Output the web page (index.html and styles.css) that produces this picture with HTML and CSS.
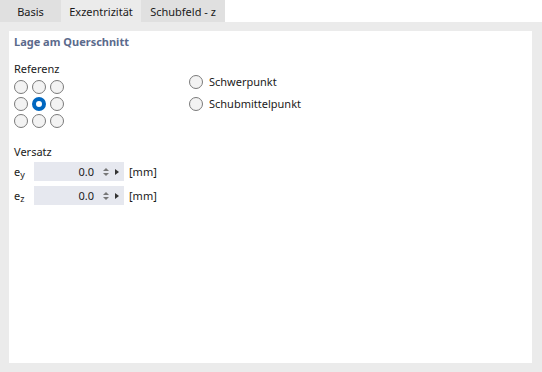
FILE: index.html
```html
<!DOCTYPE html>
<html lang="de">
<head>
    <meta charset="UTF-8">
    <title>Exzentrizität</title>
    <link rel="stylesheet" href="styles.css">
</head>
<body>
    <div class="tabs">
        <div class="tab tab-basis">Basis</div>
        <div class="tab tab-active">Exzentrizität</div>
        <div class="tab tab-schub">Schubfeld - z</div>
    </div>
    <div class="frame">
        <div class="panel">
            <h1 class="group-title">Lage am Querschnitt</h1>

            <div class="ref-row">
                <div class="ref-left">
                    <div class="label">Referenz</div>
                    <div class="grid">
                        <span class="radio"></span>
                        <span class="radio"></span>
                        <span class="radio"></span>
                        <span class="radio"></span>
                        <span class="radio checked"></span>
                        <span class="radio"></span>
                        <span class="radio"></span>
                        <span class="radio"></span>
                        <span class="radio"></span>
                    </div>
                </div>
                <div class="ref-right">
                    <div class="option"><span class="radio"></span>Schwerpunkt</div>
                    <div class="option"><span class="radio"></span>Schubmittelpunkt</div>
                </div>
            </div>

            <div class="label versatz">Versatz</div>
            <div class="field">
                <span class="sym">e<sub>y</sub></span>
                <div class="input">
                    <span class="value">0.0</span>
                    <span class="spin"><i class="up"></i><i class="down"></i></span>
                    <span class="play"></span>
                </div>
                <span class="unit">[mm]</span>
            </div>
            <div class="field">
                <span class="sym">e<sub>z</sub></span>
                <div class="input">
                    <span class="value">0.0</span>
                    <span class="spin"><i class="up"></i><i class="down"></i></span>
                    <span class="play"></span>
                </div>
                <span class="unit">[mm]</span>
            </div>
        </div>
    </div>
</body>
</html>
```

FILE: styles.css
```css
body {
    margin: 0;
    width: 542px;
    height: 372px;
    background-color: #ffffff;
    font-family: "Segoe UI", "Noto Sans", "Open Sans", sans-serif;
    font-size: 11px;
    color: #1a1a1a;
    display: flex;
    flex-direction: column;
    overflow: hidden;
}

.tabs {
    display: flex;
    height: 22px;
}

.tab {
    display: flex;
    align-items: center;
    justify-content: center;
    height: 22px;
    background-color: #e0e0e0;
}

.tab-basis {
    width: 61px;
}

.tab-active {
    width: 80px;
    background-color: #ebebeb;
}

.tab-schub {
    width: 84px;
}

.frame {
    flex: 1;
    background-color: #ebebeb;
    padding: 9px 10px 9px 9px;
    display: flex;
}

.panel {
    flex: 1;
    background-color: #ffffff;
    padding: 3px 5px;
}

.group-title {
    margin: 0;
    font-size: 11px;
    font-weight: bold;
    color: #5b6a8c;
    line-height: 16px;
}

.ref-row {
    display: flex;
    margin-top: 11px;
}

.ref-left {
    width: 175px;
}

.label {
    line-height: 16px;
}

.grid {
    display: grid;
    grid-template-columns: repeat(3, 14px);
    gap: 3px 4px;
    margin-top: 3px;
}

.radio {
    display: inline-block;
    box-sizing: border-box;
    width: 14px;
    height: 14px;
    border: 1px solid #7a7a7a;
    border-radius: 50%;
    background-color: #f3f3f3;
}

.radio.checked {
    border: 4px solid #0067c0;
    background-color: #ffffff;
}

.ref-right {
    display: flex;
    flex-direction: column;
    gap: 6px;
    margin-top: 13px;
}

.option {
    display: flex;
    align-items: center;
    gap: 6px;
    line-height: 16px;
}

.versatz {
    margin-top: 16px;
}

.field {
    display: flex;
    align-items: center;
    height: 19px;
    margin-top: 2px;
}

.field + .field {
    margin-top: 5px;
}

.sym {
    width: 20px;
    line-height: 19px;
}

.sym sub {
    font-size: 9px;
    line-height: 0;
    vertical-align: -2px;
}

.input {
    width: 90px;
    height: 19px;
    background-color: #e6e8ef;
    display: flex;
    align-items: center;
}

.value {
    width: 60px;
    text-align: right;
}

.spin {
    display: flex;
    flex-direction: column;
    gap: 2px;
    margin-left: 8px;
    width: 7px;
    align-items: center;
}

.spin i {
    width: 0;
    height: 0;
    border-left: 3px solid transparent;
    border-right: 3px solid transparent;
}

.spin .up {
    border-bottom: 3px solid #777;
}

.spin .down {
    border-top: 3px solid #777;
}

.play {
    margin-left: 6px;
    width: 0;
    height: 0;
    border-top: 3.5px solid transparent;
    border-bottom: 3.5px solid transparent;
    border-left: 4px solid #333;
}

.unit {
    margin-left: 5px;
}
```
